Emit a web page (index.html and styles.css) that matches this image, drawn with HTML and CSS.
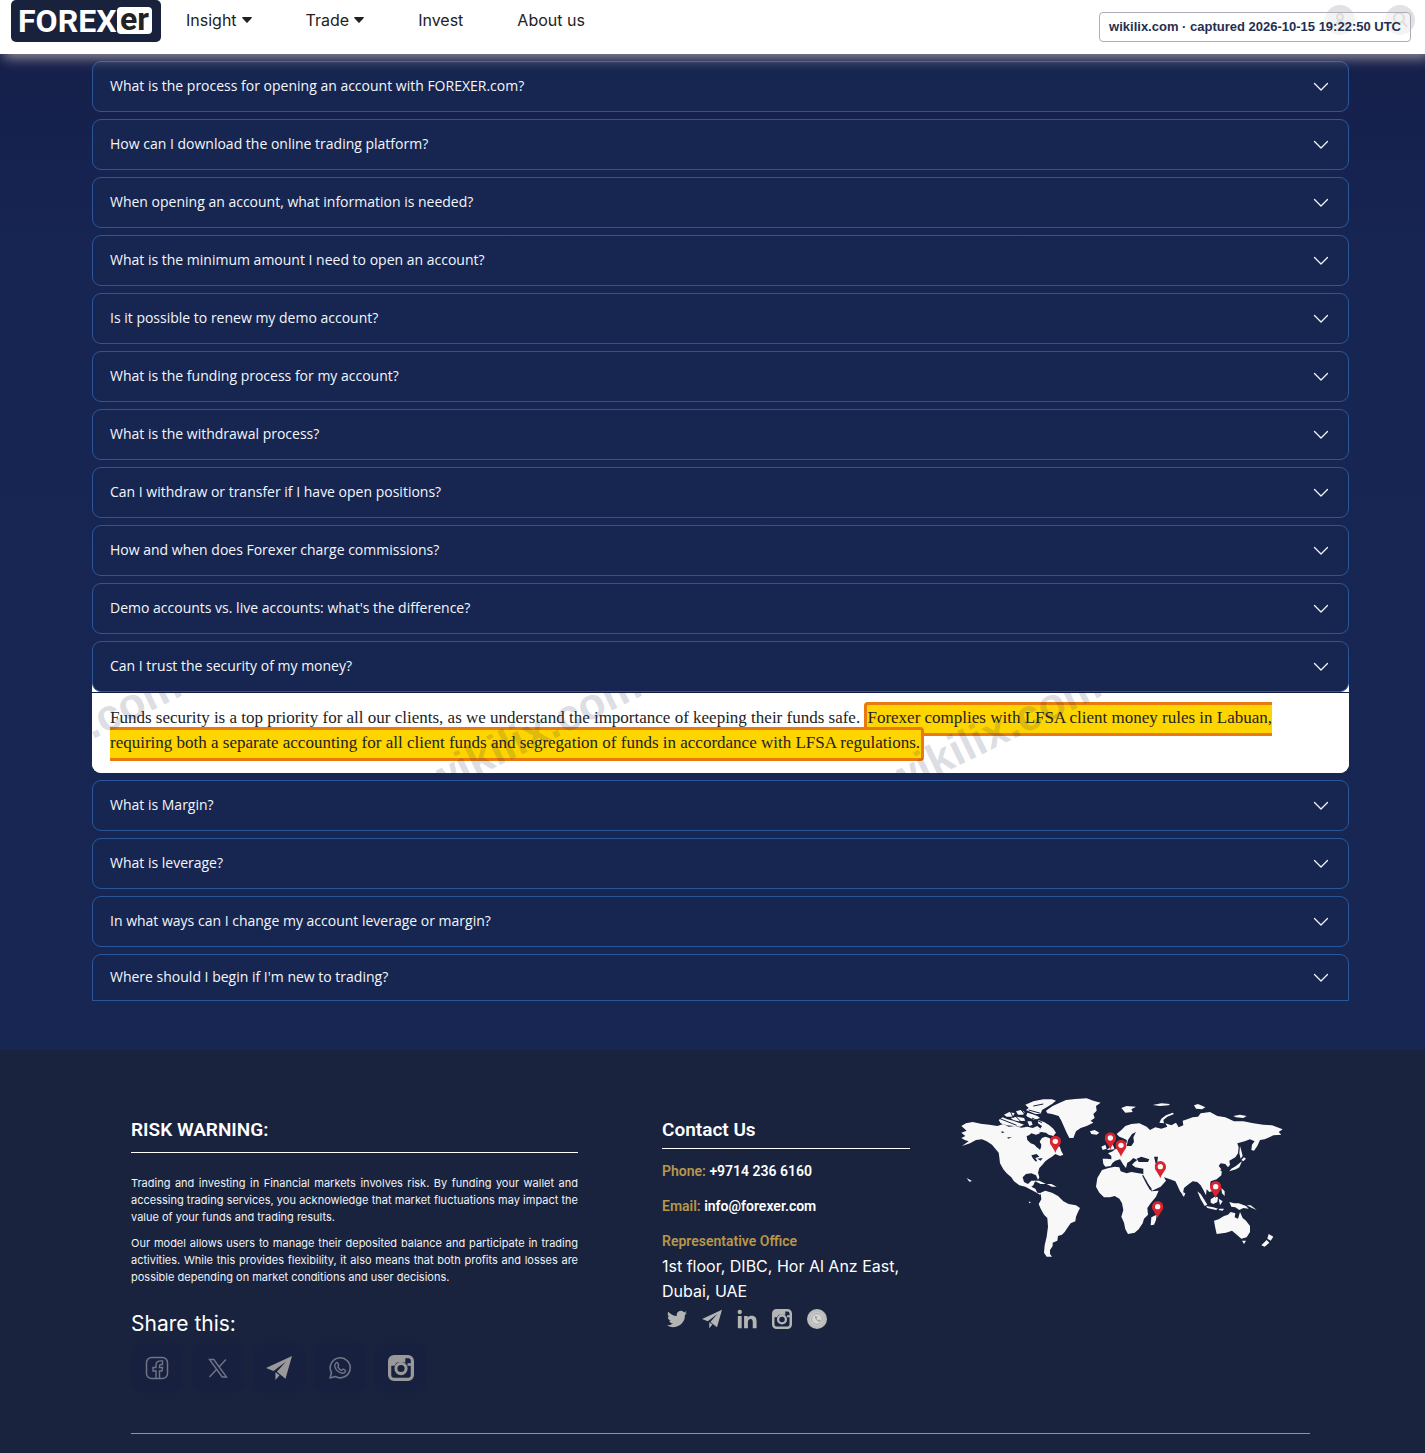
FILE: index.html
```html
<!DOCTYPE html>
<html lang="en">
<head>
<meta charset="utf-8">
<meta name="viewport" content="width=device-width, initial-scale=1">
<title>FOREXer – FAQ</title>
<link rel="stylesheet" href="styles.css">
</head>
<body>
<svg class="defs" aria-hidden="true">
  <symbol id="chevron" viewBox="0 0 16 16"><path d="M1.500 4.500 8 11l6.500-6.500" fill="none" stroke="currentColor" stroke-width="1.300" stroke-linecap="round" stroke-linejoin="round"/></symbol>
  <symbol id="caret" viewBox="0 0 10 6"><path d="M.6 0h8.800q.9.300.3 1L5.600 5.600q-.6.600-1.200 0L.3 1Q-.2.300.6 0z" fill="currentColor"/></symbol>
  <symbol id="plane" viewBox="0 0 24 24"><path d="M24 1 0 12l7 2.700L18.500 6 10 15.500l8 6.500z M8.700 16v7l3.800-4.300z" fill="currentColor"/></symbol>
  <symbol id="insta" viewBox="0 0 24 24"><rect x="1.500" y="1.500" width="21" height="21" rx="4" fill="none" stroke="currentColor" stroke-width="3"/><path d="M2 2h14v5H8L6 10H2zM18 7.500h4V10h-4z" fill="currentColor"/><circle cx="12" cy="12.500" r="4.700" fill="none" stroke="currentColor" stroke-width="2.800"/></symbol>
  <symbol id="phone" viewBox="0 0 24 24"><path d="M2 22l1.500-5.300A10 10 0 1 1 7.300 20.500z" fill="none" stroke="currentColor" stroke-width="1.600" stroke-linejoin="round"/><path d="M8.300 6.700c1-.7 1.600.2 2.300 2.300.3.900-.8 1.200-.8 1.900.8 1.700 2 2.800 3.700 3.400.7 0 1-1.400 1.800-1.100 1.800.8 2.600 1.200 2.100 2.300-.8 1.700-2.900 2.100-5 1.200-3.100-1.300-5.400-4-5.600-6.900 0-1.300.5-2.400 1.500-3.100z" fill="none" stroke="currentColor" stroke-width="1.400"/></symbol>
  <symbol id="pin" viewBox="0 0 34 54"><path d="M17 0a17 17 0 0 1 17 17c0 12-11 17-17 35C11 34 0 29 0 17A17 17 0 0 1 17 0z" fill="#d9232e"/><circle cx="17" cy="17" r="8" fill="#f8f8f8"/></symbol>
</svg>

<header class="topbar">
  <a class="logo" href="#" aria-label="FOREXer home">
    <svg viewBox="0 0 150 42" role="img" aria-label="FOREXer">
      <rect width="150" height="42" rx="5" fill="#18223d"/>
      <rect x="106" y="7" width="35" height="27" rx="4" fill="#fff"/>
      <text class="logo-word" x="7" y="32">FOREX</text>
      <text class="logo-suffix" x="109" y="30">er</text>
    </svg>
  </a>
  <nav class="nav">
    <a href="#">Insight<svg class="caret"><use href="#caret"/></svg></a>
    <a href="#">Trade<svg class="caret"><use href="#caret"/></svg></a>
    <a href="#">Invest</a>
    <a href="#">About us</a>
  </nav>
  <div class="tools">
    <button class="round" aria-label="Account"><svg viewBox="0 0 16 16"><circle cx="8" cy="5" r="3"/><path d="M2 15q1-5 6-5t6 5"/></svg></button>
    <button class="round" aria-label="Search"><svg viewBox="0 0 16 16"><circle cx="7" cy="6" r="5"/><path d="m11 10 4 5"/></svg></button>
    <div class="stamp">wikilix.com · captured 2026-10-15 19:22:50 UTC</div>
  </div>
</header>

<main class="faq">
  <button class="question">What is the process for opening an account with FOREXER.com?<svg><use href="#chevron"/></svg></button>
  <button class="question">How can I download the online trading platform?<svg><use href="#chevron"/></svg></button>
  <button class="question">When opening an account, what information is needed?<svg><use href="#chevron"/></svg></button>
  <button class="question">What is the minimum amount I need to open an account?<svg><use href="#chevron"/></svg></button>
  <button class="question">Is it possible to renew my demo account?<svg><use href="#chevron"/></svg></button>
  <button class="question">What is the funding process for my account?<svg><use href="#chevron"/></svg></button>
  <button class="question">What is the withdrawal process?<svg><use href="#chevron"/></svg></button>
  <button class="question">Can I withdraw or transfer if I have open positions?<svg><use href="#chevron"/></svg></button>
  <button class="question">How and when does Forexer charge commissions?<svg><use href="#chevron"/></svg></button>
  <button class="question">Demo accounts vs. live accounts: what's the difference?<svg><use href="#chevron"/></svg></button>
  <section class="open">
    <button class="question" aria-expanded="true" aria-controls="answer">Can I trust the security of my money?<svg><use href="#chevron"/></svg></button>
    <div class="answer" id="answer">
      <p>Funds security is a top priority for all our clients, as we understand the importance of keeping their funds safe. <mark>Forexer complies with LFSA client money rules in Labuan, requiring both a separate accounting for all client funds and segregation of funds in accordance with LFSA regulations.</mark></p>
      <svg class="watermark" aria-hidden="true">
        <text transform="translate(-13 53) rotate(-26)">wikilix.com</text>
        <text transform="translate(447 53) rotate(-26)">wikilix.com</text>
        <text transform="translate(907 53) rotate(-26)">wikilix.com</text>
      </svg>
    </div>
  </section>
  <button class="question">What is Margin?<svg><use href="#chevron"/></svg></button>
  <button class="question">What is leverage?<svg><use href="#chevron"/></svg></button>
  <button class="question">In what ways can I change my account leverage or margin?<svg><use href="#chevron"/></svg></button>
  <button class="question last">Where should I begin if I'm new to trading?<svg><use href="#chevron"/></svg></button>
</main>

<footer class="footer">
  <div class="columns">
    <section class="risk">
      <h2>RISK WARNING:</h2>
      <p>Trading and investing in Financial markets involves risk. By funding your wallet and accessing trading services, you acknowledge that market fluctuations may impact the value of your funds and trading results.</p>
      <p>Our model allows users to manage their deposited balance and participate in trading activities. While this provides flexibility, it also means that both profits and losses are possible depending on market conditions and user decisions.</p>
      <h3>Share this:</h3>
      <div class="share">
        <a href="#" aria-label="Facebook"><svg class="dim" viewBox="0 0 24 24"><rect x="1.500" y="1.500" width="21" height="21" rx="5" fill="none" stroke="currentColor" stroke-width="1.500"/><path d="M11 22v-7H8v-3.500h3V9c0-3 2-4.500 6.500-4v3.500H16c-1 0-1.500.5-1.500 1.500v1.500h3l-.5 3.500h-2.500v7" fill="none" stroke="currentColor" stroke-width="1.400"/></svg></a>
        <a href="#" aria-label="X"><svg class="dim" viewBox="0 0 24 24"><path d="M3.500 3.500h4.300l12.700 17.500h-4.300zM20 3.500l-7.300 7.700M10.700 13.200 3.500 21" fill="none" stroke="currentColor" stroke-width="1.400"/></svg></a>
        <a href="#" aria-label="Telegram"><svg class="big"><use href="#plane"/></svg></a>
        <a href="#" aria-label="WhatsApp"><svg class="dim"><use href="#phone"/></svg></a>
        <a href="#" aria-label="Instagram"><svg class="big"><use href="#insta"/></svg></a>
      </div>
    </section>
    <section class="contact">
      <h2>Contact Us</h2>
      <p class="line">Phone: <b>+9714 236 6160</b></p>
      <p class="line">Email: <a href="#">info@forexer.com</a></p>
      <p class="line">Representative Office</p>
      <address>1st floor, DIBC, Hor Al Anz East, Dubai, UAE</address>
      <div class="social">
        <a href="#" aria-label="Twitter"><svg viewBox="0 0 24 24"><path d="M24 4.600a10 10 0 0 1-2.800.8 5 5 0 0 0 2.100-2.700 10 10 0 0 1-3.100 1.200 4.900 4.900 0 0 0-8.400 4.500A14 14 0 0 1 1.700 3.200a4.900 4.900 0 0 0 1.500 6.500 5 5 0 0 1-2.200-.6 4.900 4.900 0 0 0 3.900 4.900 5 5 0 0 1-2.200.1 4.900 4.900 0 0 0 4.600 3.400A9.900 9.900 0 0 1 0 19.500 14 14 0 0 0 21.500 7.100 10 10 0 0 0 24 4.600z" fill="currentColor"/></svg></a>
        <a href="#" aria-label="Telegram"><svg><use href="#plane"/></svg></a>
        <a href="#" aria-label="LinkedIn"><svg viewBox="0 0 24 24"><path d="M1 8.500h4.600V23H1zM3.300 1a2.600 2.600 0 1 1 0 5.200 2.600 2.600 0 0 1 0-5.200zM8.500 8.500h4.400v2c1-1.600 2.500-2.400 4.700-2.400 4.500 0 5.900 2.700 5.900 7.200V23h-4.600v-7c0-2.300-.5-4-2.600-4-2.300 0-3.200 1.600-3.200 4v7H8.500z" fill="currentColor"/></svg></a>
        <a href="#" aria-label="Instagram"><svg><use href="#insta"/></svg></a>
        <a href="#" aria-label="WhatsApp"><svg viewBox="0 0 24 24"><circle cx="12" cy="12" r="12" fill="#bcbcbc"/><circle cx="12" cy="12" r="8" fill="#d4d4d4"/><circle cx="12" cy="12" r="6.500" fill="none" stroke="#9d9d9d"/><path d="M9.500 8.500q0 5.500 6 7l1-1.800-2.200-1-1 1q-1.500-.8-2-2.400l.8-.9-.8-2z" fill="#999"/></svg></a>
      </div>
    </section>
    <svg class="map" viewBox="0 0 1035 540" role="img" aria-label="World map with office locations">
      <g fill="#f8f8f8">
        <path d="M34 108 48 100 68 96 92 101 118 104 142 108 160 102 176 110 196 108 214 113 232 110 248 114 262 108 272 116 262 124 270 130 258 134 244 130 232 140 236 152 250 160 260 172 270 178 274 168 268 156 276 144 286 140 298 144 306 152 318 160 330 172 334 184 340 194 330 198 316 192 306 200 296 206 286 214 276 226 268 234 264 248 268 262 264 270 258 256 244 250 228 252 218 262 222 276 234 282 244 272 256 272 250 286 244 290 256 296 262 308 276 310 270 314 256 306 240 298 226 290 208 286 192 274 184 262 170 250 160 238 150 220 148 202 146 188 136 176 126 164 110 154 96 148 78 150 60 160 36 168 56 154 44 150 34 144 46 138 34 128 50 122z"/>
        <path d="M146 90 158 82 172 88 190 92 206 98 222 104 210 110 192 108 170 106 152 100zM162 74 178 66 194 70 188 80 170 80zM198 64 212 60 224 66 220 74 204 74zM182 84 200 80 222 84 226 92 206 94 190 90zM226 44 250 34 280 28 306 28 318 32 306 42 290 52 276 60 272 72 256 72 242 66 228 60 236 54zM232 68 246 72 262 78 270 84 254 90 240 84 228 78zM264 90 282 96 298 106 310 116 318 128 310 138 296 134 288 128 274 126 262 130 254 124 270 118 276 108 264 100zM232 94 244 94 248 104 238 108z"/>
        <path d="M288 62 308 48 326 40 348 30 376 27 410 25 430 32 452 38 438 48 440 62 430 72 434 84 422 92 430 98 410 108 392 114 378 124 370 144 358 144 350 128 342 110 334 92 326 78 306 72 292 70zM420 124 434 120 448 128 440 134 424 132z"/>
        <path d="M252 272 268 272 288 282 272 282zM290 282 304 282 320 290 306 290zM50 264l16 9-8 2zM236 334l7 4-5 2z"/>
        <path d="M272 308 286 302 306 308 324 318 340 334 356 342 378 346 390 354 384 366 378 380 376 394 362 400 352 414 344 426 336 434 324 438 322 452 308 458 308 468 300 480 300 492 306 500 290 500 282 488 284 466 290 440 294 410 292 384 282 374 272 356 266 342 274 328z"/>
        <path d="M456 240 476 234 494 230 508 232 512 244 530 250 544 246 566 250 580 252 586 266 594 284 604 304 626 302 618 320 602 340 592 354 594 374 582 386 578 400 566 418 554 428 534 432 526 418 522 398 514 380 520 360 516 340 508 326 494 318 480 322 462 322 448 308 438 290 442 264z"/>
        <path d="M458 206 470 206 484 208 484 198 474 190 488 184 498 176 510 172 522 164 530 158 530 150 518 144 508 140 500 132 514 120 526 108 544 102 568 100 590 110 600 120 616 112 634 116 652 110 646 100 664 106 678 98 686 112 700 106 698 92 712 88 728 82 744 80 752 70 780 66 802 78 826 82 852 94 880 94 910 100 940 104 966 106 998 118 986 126 994 134 970 136 958 142 944 148 930 150 922 168 912 182 904 180 906 164 914 154 900 148 884 154 862 160 866 172 864 190 856 202 838 212 840 224 834 232 826 222 812 220 806 228 816 240 814 256 800 268 782 274 780 286 790 302 778 306 770 298 768 316 760 300 752 286 742 276 728 274 712 286 702 294 698 314 690 304 682 286 676 274 660 268 642 262 648 272 632 290 606 302 598 290 590 272 580 256 580 236 556 232 546 224 554 216 562 210 550 204 540 214 532 218 528 234 520 224 510 208 496 212 488 218 482 228 466 230 460 222zM454 170 466 164 470 176 458 180zM470 180 480 172 480 154 486 158 494 178z"/>
        <path d="M514 54 530 48 558 50 544 58 548 66 526 68zM608 45 634 40 660 42 656 46 630 48zM628 98 634 86 648 76 668 68 672 72 652 80 640 90 642 100zM732 46 744 42 766 52 756 58 738 56zM850 78 870 74 890 78 880 84 858 82zM870 168l4 14 4 16-6 8-4-16zM874 210l8-8 6 4-8 8zM876 214 868 232 858 238 838 244 844 236 858 228 868 220z"/>
        <path d="M604 382 620 374 618 390 612 404 602 406zM698 306l8 4-4 10-5-4zM742 304 752 312 762 328 772 344 764 348 752 328zM768 348 790 352 804 356 798 360 772 354zM782 328 794 320 804 322 802 336 790 342 782 338zM806 326 818 334 810 346zM814 294 824 304 824 318 816 310zM838 336 852 340 866 340 888 348 896 356 880 354 868 360 856 352 844 350zM808 356l14 0-4 6-12-2zM890 346l12 0 18 14-14-6z"/>
        <path d="M792 392 806 388 822 378 834 374 842 366 856 370 854 382 864 386 870 366 878 384 888 392 900 408 900 426 890 442 874 446 862 436 846 422 828 428 800 432 796 414zM876 452l12 0-6 10zM956 432 970 440 962 452 952 446zM950 450 958 458 944 470 934 466z"/>
      </g>
      <g fill="#19233e">
        <path d="M230 138 244 134 254 144 264 146 274 164 270 180 258 166 242 160 232 150zM244 196l16-4 8 8-12 4 6 10-6 0-8-10zM262 206l16-2-6 8zM530 168 534 150 546 132 558 126 550 142 552 156 544 168zM560 206 574 200 598 208 594 216 566 216zM612 200 624 200 622 214 628 230 618 224zM576 256 580 256 592 278 606 298 600 300 588 280zM154 124l10 2-8 4zM172 142l14 0-12 4zM810 240l12-6 0 16z"/>
        <path d="M180 62l10 22M196 78l20 20M150 86l50 20M214 60l24 30M236 60l36 10M250 48l30-6M246 84l30 14" fill="none" stroke="#19233e" stroke-width="3"/>
      </g>
      <use href="#pin" x="299" y="137" width="34" height="54"/>
      <use href="#pin" x="464" y="127" width="34" height="54"/>
      <use href="#pin" x="496" y="149" width="34" height="54"/>
      <use href="#pin" x="614" y="213" width="34" height="54"/>
      <use href="#pin" x="780" y="273" width="34" height="54"/>
      <use href="#pin" x="606" y="333" width="34" height="54"/>
    </svg>
  </div>
  <hr>
</footer>
</body>
</html>
```
FILE: styles.css
```css
* { box-sizing: border-box; }

body {
  margin: 0;
  background: #19233e;
  color: #fff;
  font-family: Inter, "Liberation Sans", sans-serif;
  font-size: 16px;
}

a { color: inherit; text-decoration: none; }
button { font: inherit; }
.defs { display: none; }

/* Top bar */
.topbar {
  position: relative;
  z-index: 1;
  display: flex;
  align-items: flex-start;
  height: 54px;
  padding: 0 10px 0 11px;
  background: #fff;
  box-shadow: 4px 4px 12px rgba(200, 190, 190, .7);
}
.logo svg { display: block; width: 150px; height: 42px; }
.logo-word, .logo-suffix { font-family: Roboto, Arial, sans-serif; font-weight: 700; }
.logo-word { fill: #fff; font-size: 32px; }
.logo-suffix { fill: #222; font-size: 32px; }

.nav { display: flex; gap: 54px; margin-left: 25px; }
.nav a {
  display: flex;
  align-items: center;
  color: #222;
  line-height: 40px;
}
.caret { width: 10px; height: 6px; margin-left: 5px; }

.tools {
  position: relative;
  display: flex;
  gap: 30px;
  margin-left: auto;
  padding-top: 5px;
}
.round {
  width: 30px;
  height: 30px;
  padding: 7px;
  border: 0;
  border-radius: 50%;
  background: #e2e2e2;
}
.round svg { display: block; width: 16px; height: 16px; fill: none; stroke: #aaa; stroke-width: 2; }
.stamp {
  position: absolute;
  top: 12px;
  right: 4px;
  padding: 0 9px;
  border: 1px solid #aaaeb8;
  border-radius: 4px;
  background: rgba(255, 255, 255, .6);
  color: #1f2f52;
  font: 700 13px/28px "Liberation Sans", Arial, sans-serif;
  white-space: nowrap;
}

/* Questions */
.faq {
  display: flex;
  flex-direction: column;
  gap: 7px;
  padding: 7px 76px 49px 92px;
  background: linear-gradient(#151f4a, #172553 20%, #182654);
}
.question {
  display: flex;
  align-items: center;
  justify-content: space-between;
  width: 100%;
  height: 51px;
  padding: 0 19px 2px 17px;
  border: 1px solid #2b5799;
  border-radius: 9px;
  background: #172651;
  color: #f4f6fb;
  font-family: "Open Sans", sans-serif;
  font-size: 14px;
  text-align: left;
}
.question svg { width: 16px; height: 16px; margin-top: 2px; }
.question.last { height: 47px; border-radius: 9px 9px 0 0; }

.open { border-radius: 16px 16px 9px 9px; background: #fff; }
.answer {
  position: relative;
  overflow: hidden;
  padding: 12px 60px 18px 18px;
  border-radius: 0 0 9px 9px;
  border-top: 1px solid #101b45;
  background: #fff;
  color: #222;
  font: 17px/25px "Liberation Serif", "Times New Roman", serif;
}
.answer p { margin: 0; }
mark {
  padding: 3px 1px 6px 0;
  border: 3px solid #e87a10;
  border-radius: 4px;
  background: #ffd500;
  color: #222;
}
.watermark {
  position: absolute;
  inset: 0;
  width: 100%;
  height: 100%;
}
.watermark text {
  fill: rgba(31, 47, 82, .17);
  font: 700 44px "Liberation Sans", Arial, sans-serif;
  text-anchor: middle;
}

/* Footer */
.footer { padding: 67px 115px 19px 131px; }
.columns { display: grid; grid-template-columns: 531fr 298fr 350fr; min-height: 316px; }
.footer h2 {
  margin: 0;
  border-bottom: 1px solid #fff;
  font: 600 19px/26px Roboto, sans-serif;
}
.risk { padding-right: 84px; }
.risk h2 { padding-bottom: 9px; margin-bottom: 22px; }
.risk p {
  margin: 0 0 9px;
  color: #f0f2f7;
  font-size: 11px;
  line-height: 17px;
  text-align: justify;
}
.risk h3 { margin: 25px 0 6px; font-size: 21px; font-weight: 400; line-height: 26px; }
.share { display: flex; gap: 9px; }
.share a {
  display: grid;
  place-items: center;
  width: 52px;
  height: 50px;
  border-radius: 10px;
  background: #17213f;
}
.share svg { width: 24px; height: 24px; color: #999; }
.share .big { width: 26px; height: 26px; }
.share .dim { color: #6f7585; }

.contact { padding-right: 50px; }
.contact h2 { padding-bottom: 5px; margin-bottom: 12px; }
.line { margin: 0 0 15px; color: #b8964a; font: 600 14px/20px Roboto, sans-serif; }
.line b, .line a { color: #fff; font-weight: 600; }
address { margin-top: -12px; font-style: normal; line-height: 25px; }
.social { display: flex; gap: 15px; padding: 5px; color: #b4b4b4; }
.social svg { display: block; width: 20px; height: 20px; }

.map { width: 100%; max-width: 345px; margin-top: -27px; margin-left: -10px; }
hr { margin: 0; border: 0; border-top: 1px solid #8c92a0; }
```
